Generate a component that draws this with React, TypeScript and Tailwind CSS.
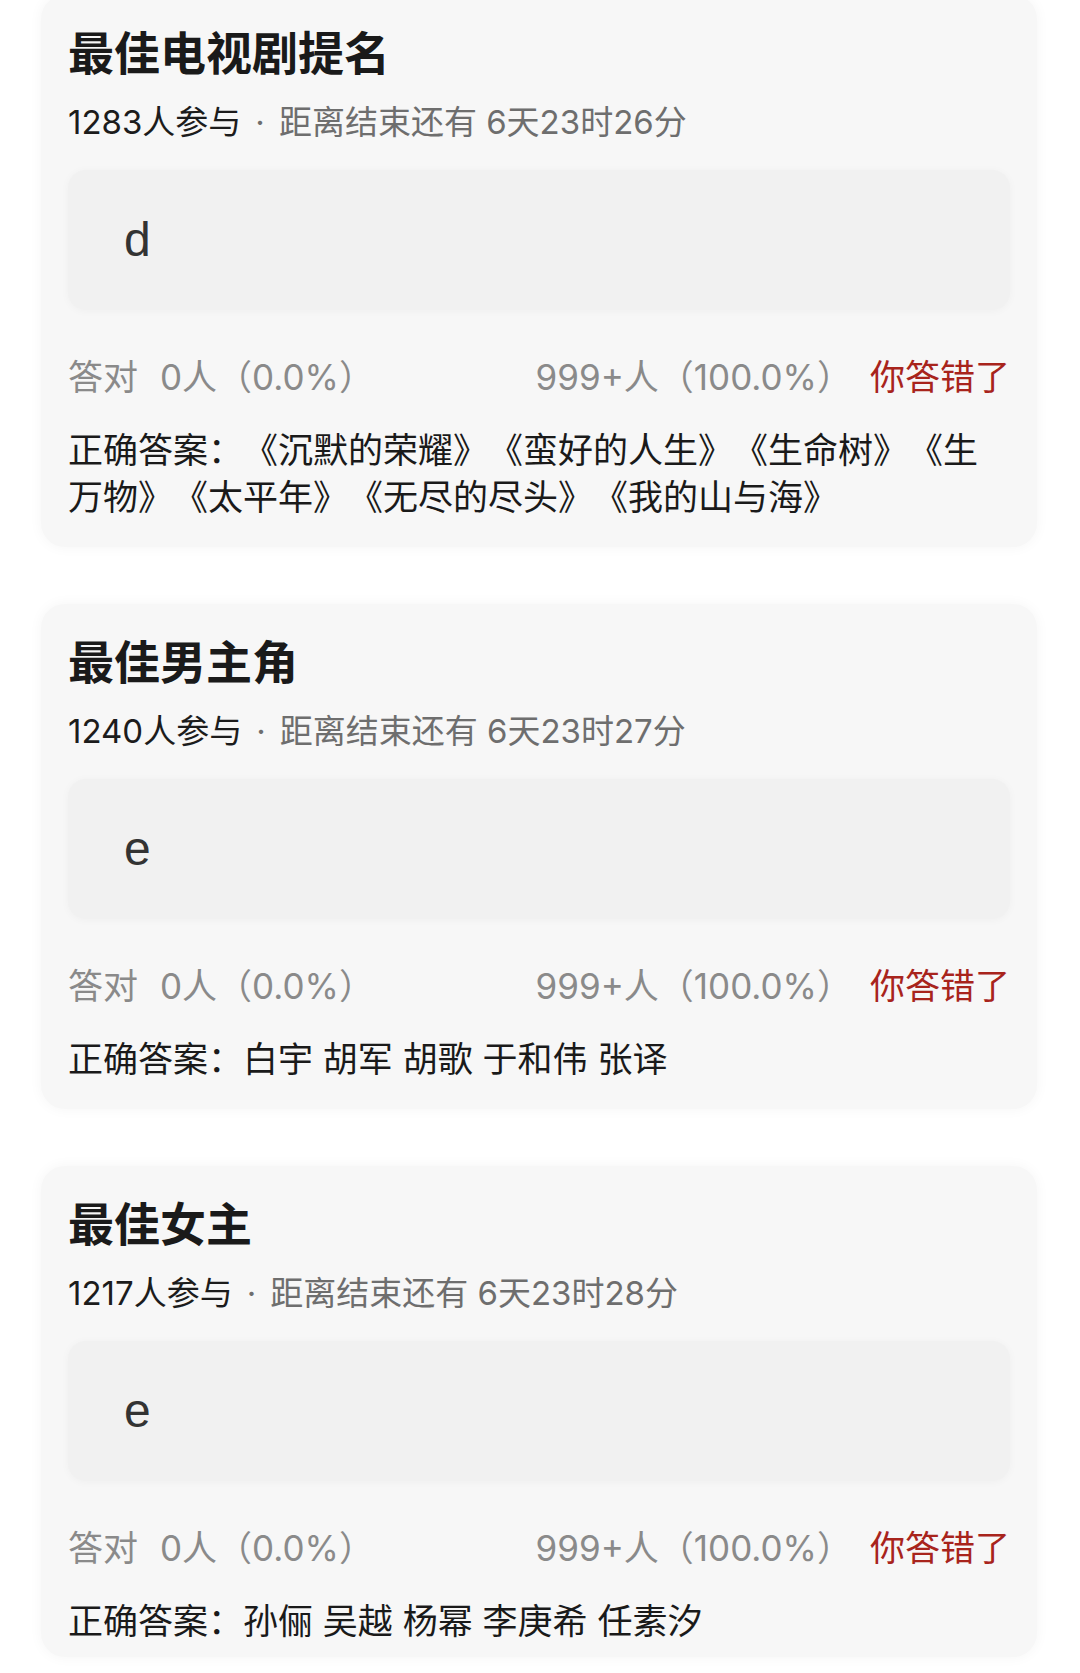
import React from 'react';

type Vote = {
  title: string;
  joined: string;
  left: string;
  answer: string;
  correct: string;
};

const VOTES: Vote[] = [
  {
    title: '最佳电视剧提名',
    joined: '1283人参与',
    left: '6天23时26分',
    answer: 'd',
    correct: '《沉默的荣耀》《蛮好的人生》《生命树》《生万物》《太平年》《无尽的尽头》《我的山与海》',
  },
  {
    title: '最佳男主角',
    joined: '1240人参与',
    left: '6天23时27分',
    answer: 'e',
    correct: '白宇 胡军 胡歌 于和伟 张译',
  },
  {
    title: '最佳女主',
    joined: '1217人参与',
    left: '6天23时28分',
    answer: 'e',
    correct: '孙俪 吴越 杨幂 李庚希 任素汐',
  },
];

const FONT = { fontFamily: 'Inter, "Noto Sans CJK SC", sans-serif' };

function VoteCard({ v }: { v: Vote }) {
  return (
    <div className="bg-[#f7f7f7] rounded-[24px] px-[27px] pt-[30px] pb-[26px] last:pb-[12px] shadow-[0_0_14px_rgba(0,0,0,0.045)] [text-spacing-trim:space-all]">
      <h2 className="text-[46px] leading-[56px] font-bold text-[#1a1a1a] whitespace-nowrap">{v.title}</h2>
      <p className="mt-[21px] text-[33px] leading-[40px] whitespace-nowrap">
        <span className="text-[#1c1c1c]">{v.joined}</span>
        <span className="text-[#6e6e6e] mx-[14px]">·</span>
        <span className="text-[#6e6e6e]">距离结束还有 {v.left}</span>
      </p>
      <div className="mt-[28px] h-[140px] rounded-[18px] bg-[#f1f1f1] shadow-[0_1px_8px_rgba(0,0,0,0.035)] flex items-center pl-[56px]">
        <span className="text-[48px] text-[#333333]" style={{ fontFamily: '"Liberation Sans", Arial, sans-serif' }}>{v.answer}</span>
      </div>
      <div className="mt-[43px] flex items-center justify-between text-[35px] leading-[48px] text-[#8a8a8a] whitespace-nowrap">
        <div className="flex">
          <span>答对</span>
          <span className="ml-[22px]">0人（0.0%）</span>
        </div>
        <div className="flex">
          <span>999+人（100.0%）</span>
          <span className="ml-[18px] text-[#a8241c]">你答错了</span>
        </div>
      </div>
      <p className="mt-[26px] text-[35px] leading-[47px] text-[#1a1a1a]">正确答案：{v.correct}</p>
    </div>
  );
}

export default function App() {
  return (
    <div className="w-[1080px] h-[1673px] overflow-hidden bg-white" style={FONT}>
      <div className="-mt-[5px] pl-[41px] pr-[43px] flex flex-col gap-[57px]">
        {VOTES.map(v => (
          <VoteCard key={v.title} v={v} />
        ))}
      </div>
    </div>
  );
}
